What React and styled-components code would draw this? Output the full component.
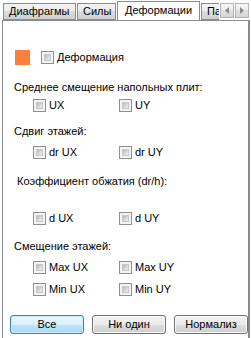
import React from "react";
import styled, { createGlobalStyle } from "styled-components";

const Global = createGlobalStyle`
  html, body { margin: 0; padding: 0; background: #ffffff; }
  body { font-family: "Liberation Sans", Arial, sans-serif; font-size: 11px; color: #000; }
`;

const Root = styled.div`
  width: 251px;
  height: 338px;
  overflow: hidden;
  display: flex;
  flex-direction: column;
  background: #ffffff;
`;

const TabStrip = styled.div`
  height: 20px;
  display: flex;
  align-items: flex-end;
  padding-left: 3px;
  position: relative;
  z-index: 2;
`;

const TabRow = styled.div`
  flex: 1;
  display: flex;
  align-items: flex-end;
  height: 20px;
  overflow: hidden;
`;

const Tab = styled.div`
  flex: none;
  box-sizing: border-box;
  width: ${(p) => p.$w}px;
  margin-left: ${(p) => (p.$first ? 0 : 1)}px;
  height: ${(p) => (p.$active ? 20 : 17)}px;
  margin-bottom: ${(p) => (p.$active ? -1 : 0)}px;
  border: 1px solid #898c95;
  border-bottom: ${(p) => (p.$active ? "none" : "1px solid #898c95")};
  background: ${(p) =>
    p.$active
      ? "#ffffff"
      : "linear-gradient(#f2f2f2 0%, #ebebeb 50%, #dddddd 50%, #cfcfcf 100%)"};
  padding-left: ${(p) => (p.$active ? 7 : 5)}px;
  display: flex;
  align-items: center;
  white-space: nowrap;
  line-height: 13px;
  padding-bottom: ${(p) => (p.$active ? 2 : 0)}px;
`;

const Scroller = styled.div`
  flex: none;
  display: flex;
  align-self: flex-start;
  margin-top: 3px;
  margin-right: 2px;
  margin-left: 1px;
`;

const ScrollBtn = styled.div`
  width: 14px;
  height: 15px;
  box-sizing: border-box;
  border: 1px solid #b4b4b4;
  background: linear-gradient(#f6f6f6 0%, #ececec 50%, #e0e0e0 50%, #d6d6d6 100%);
  display: flex;
  align-items: center;
  justify-content: center;
  & + & { margin-left: 1px; }
`;

const Panel = styled.div`
  flex: 1;
  margin-left: 2px;
  width: 248px;
  box-sizing: border-box;
  border: 1px solid #898c95;
  border-bottom: none;
  border-right: 2px solid #898c95;
  background: #ffffff;
  display: flex;
  flex-direction: column;
`;

const TopRow = styled.div`
  margin-top: 29px;
  height: 15px;
  display: flex;
  align-items: center;
  padding-left: 12px;
`;

const Swatch = styled.div`
  width: 15px;
  height: 15px;
  background: #fd7f3e;
  margin-right: 11px;
`;

const SectionLabel = styled.div`
  margin-top: ${(p) => p.$mt}px;
  margin-left: ${(p) => p.$ml || 11}px;
  line-height: 13px;
  height: 13px;
  white-space: nowrap;
`;

const CheckRow = styled.div`
  margin-top: ${(p) => p.$mt}px;
  padding-left: 30px;
  display: grid;
  grid-template-columns: 86px auto;
  height: 13px;
`;

const Check = styled.label`
  display: flex;
  align-items: center;
  height: 13px;
  line-height: 13px;
  white-space: nowrap;
`;

const Box = styled.span`
  width: 13px;
  height: 13px;
  box-sizing: border-box;
  border: 1px solid #8e8f8f;
  background: #f4f4f4;
  padding: 2px;
  margin-right: 3px;
  display: inline-flex;
  flex: none;
  &::after {
    content: "";
    flex: 1;
    background: linear-gradient(135deg, #b2b6bb 0%, #dcdddf 60%, #eeeeee 100%);
    border: 1px solid #c5c8cc;
    box-sizing: border-box;
  }
`;

const ButtonRow = styled.div`
  margin-top: 19px;
  padding-left: 7px;
  display: flex;
  gap: 8px;
`;

const Button = styled.div`
  width: 74px;
  height: 19px;
  box-sizing: border-box;
  border: 1px solid ${(p) => (p.$default ? "#3c7fb1" : "#707070")};
  border-radius: 3px;
  box-shadow: inset 0 0 0 1px ${(p) => (p.$default ? "#d3ecfa" : "#fbfbfb")};
  background: ${(p) =>
    p.$default
      ? "linear-gradient(#eaf6fd 0%, #d9f0fc 50%, #bee6fd 50%, #a7d9f5 100%)"
      : "linear-gradient(#f2f2f2 0%, #ebebeb 50%, #dddddd 50%, #cfcfcf 100%)"};
  display: flex;
  align-items: center;
  justify-content: center;
  line-height: 13px;
`;

const CheckItem = ({ children }) => (
  <Check>
    <Box />
    {children}
  </Check>
);

const Arrow = ({ dir }) => (
  <svg width="4" height="7" viewBox="0 0 4 7">
    {dir === "left" ? (
      <path d="M4 0 L0 3.5 L4 7 Z" fill="#8a8a8a" />
    ) : (
      <path d="M0 0 L4 3.5 L0 7 Z" fill="#8a8a8a" />
    )}
  </svg>
);

export default function App() {
  return (
    <>
      <Global />
      <Root>
        <TabStrip>
          <TabRow>
            <Tab $first $w={73}>Диафрагмы</Tab>
            <Tab $w={39}>Силы</Tab>
            <Tab $active $w={83}>Деформации</Tab>
            <Tab $w={60}>Параметры</Tab>
          </TabRow>
          <Scroller>
            <ScrollBtn><Arrow dir="left" /></ScrollBtn>
            <ScrollBtn><Arrow dir="right" /></ScrollBtn>
          </Scroller>
        </TabStrip>
        <Panel>
          <TopRow>
            <Swatch />
            <CheckItem>Деформация</CheckItem>
          </TopRow>

          <SectionLabel $mt={16}>Среднее смещение напольных плит:</SectionLabel>
          <CheckRow $mt={5}>
            <CheckItem>UX</CheckItem>
            <CheckItem>UY</CheckItem>
          </CheckRow>

          <SectionLabel $mt={13}>Сдвиг этажей:</SectionLabel>
          <CheckRow $mt={8}>
            <CheckItem>dr UX</CheckItem>
            <CheckItem>dr UY</CheckItem>
          </CheckRow>

          <SectionLabel $mt={16} $ml={14}>Коэффициент обжатия (dr/h):</SectionLabel>
          <CheckRow $mt={24}>
            <CheckItem>d UX</CheckItem>
            <CheckItem>d UY</CheckItem>
          </CheckRow>

          <SectionLabel $mt={15}>Смещение этажей:</SectionLabel>
          <CheckRow $mt={8}>
            <CheckItem>Max UX</CheckItem>
            <CheckItem>Max UY</CheckItem>
          </CheckRow>
          <CheckRow $mt={9}>
            <CheckItem>Min UX</CheckItem>
            <CheckItem>Min UY</CheckItem>
          </CheckRow>

          <ButtonRow>
            <Button $default>Все</Button>
            <Button>Ни один</Button>
            <Button>Нормализ</Button>
          </ButtonRow>
        </Panel>
      </Root>
    </>
  );
}
